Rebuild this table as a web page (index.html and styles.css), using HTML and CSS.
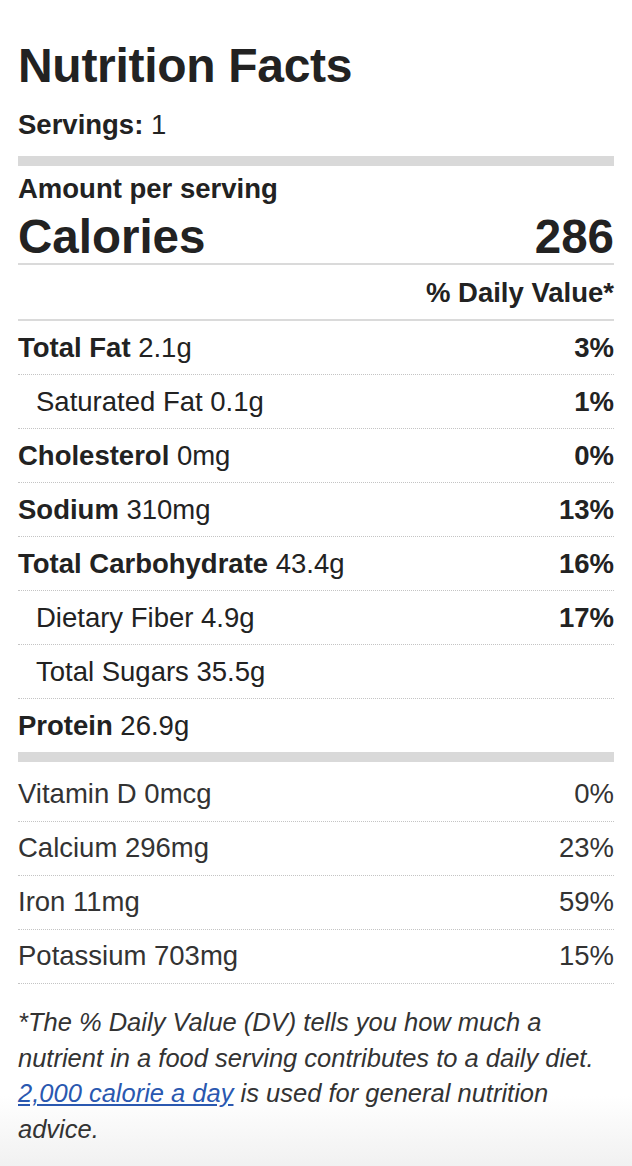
FILE: index.html
```html
<!DOCTYPE html>
<html lang="en">
<head>
    <meta charset="UTF-8">
    <meta name="viewport" content="width=device-width, initial-scale=1.0">
    <title>Nutrition Facts</title>
    <link rel="stylesheet" href="styles.css">
</head>
<body>
    <div class="label">
        <h1 class="label-title">Nutrition Facts</h1>
        <div class="servings"><strong>Servings:</strong> 1</div>

        <div class="bar"></div>

        <div class="amount">Amount per serving</div>
        <div class="calories">
            <span>Calories</span>
            <span>286</span>
        </div>
        <div class="dv-head">% Daily Value*</div>

        <div class="row">
            <span><strong>Total Fat</strong> 2.1g</span>
            <strong>3%</strong>
        </div>
        <div class="row sub">
            <span>Saturated Fat 0.1g</span>
            <strong>1%</strong>
        </div>
        <div class="row">
            <span><strong>Cholesterol</strong> 0mg</span>
            <strong>0%</strong>
        </div>
        <div class="row">
            <span><strong>Sodium</strong> 310mg</span>
            <strong>13%</strong>
        </div>
        <div class="row">
            <span><strong>Total Carbohydrate</strong> 43.4g</span>
            <strong>16%</strong>
        </div>
        <div class="row sub">
            <span>Dietary Fiber 4.9g</span>
            <strong>17%</strong>
        </div>
        <div class="row sub">
            <span>Total Sugars 35.5g</span>
        </div>
        <div class="row last">
            <span><strong>Protein</strong> 26.9g</span>
        </div>

        <div class="bar"></div>

        <div class="vitamins">
            <div class="row">
                <span>Vitamin D 0mcg</span>
                <span>0%</span>
            </div>
            <div class="row">
                <span>Calcium 296mg</span>
                <span>23%</span>
            </div>
            <div class="row">
                <span>Iron 11mg</span>
                <span>59%</span>
            </div>
            <div class="row">
                <span>Potassium 703mg</span>
                <span>15%</span>
            </div>
        </div>

        <p class="footnote">*The % Daily Value (DV) tells you how much a nutrient in a food serving contributes to a daily diet. <a href="#">2,000 calorie a day</a> is used for general nutrition advice.</p>
    </div>
</body>
</html>
```

FILE: styles.css
```css
* {
    box-sizing: border-box;
}

body {
    margin: 0;
    min-height: 100vh;
    font-family: "Liberation Sans", Arial, sans-serif;
    color: #222;
    background: linear-gradient(to bottom, #fff 0, #fff calc(100% - 70px), #f1f1f1 100%);
}

.label {
    padding: 38px 18px 0 18px;
    font-size: 27.5px;
    line-height: 34px;
}

.label-title {
    margin: 0;
    font-size: 48px;
    line-height: 56px;
    font-weight: bold;
    letter-spacing: -0.3px;
}

.servings {
    margin-top: 14px;
}

.bar {
    height: 10px;
    background-color: #d9d9d9;
    margin-top: 14px;
}

.amount {
    margin-top: 6px;
    font-weight: bold;
}

.calories {
    display: flex;
    justify-content: space-between;
    font-size: 47.5px;
    line-height: 52px;
    font-weight: bold;
    margin-top: 5px;
    border-bottom: 2px solid #dadada;
}

.dv-head {
    text-align: right;
    font-weight: bold;
    padding: 11px 0 9px;
    border-bottom: 2px solid #dadada;
}

.row {
    display: flex;
    justify-content: space-between;
    line-height: 30px;
    padding: 12px 0 11px;
    border-bottom: 1px dotted #c4c4c4;
}

.row.sub {
    padding-left: 18px;
}

.row.last {
    border-bottom: none;
    padding-bottom: 11px;
}

.row.last + .bar {
    margin-top: 0;
}

.vitamins {
    margin-top: 6px;
    color: #333;
}

.vitamins .row {
    padding: 11px 0 12px;
}

.footnote {
    margin: 21px 0 0;
    font-size: 25.5px;
    line-height: 35.6px;
    font-style: italic;
    color: #333;
}

.footnote a {
    color: #2a58b0;
}
```
